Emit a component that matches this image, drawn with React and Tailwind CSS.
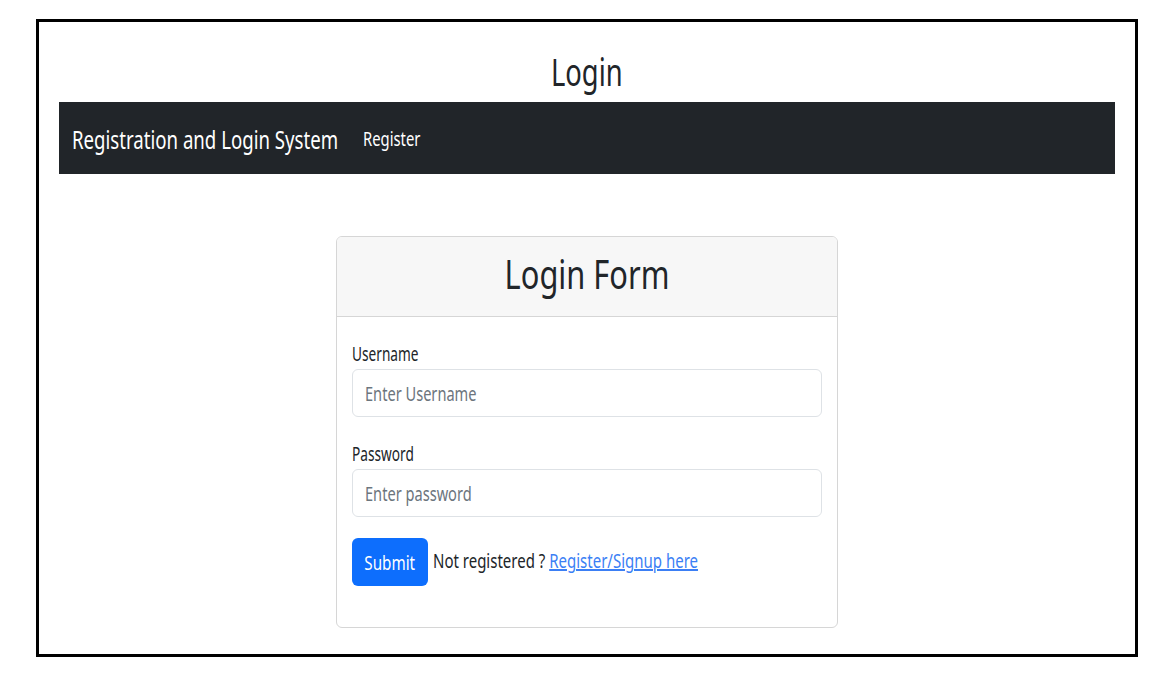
import React, { useState } from "react";

const font = { fontFamily: '"Noto Sans", "Open Sans", sans-serif' };

// the reference renders its UI font narrow; squeeze text horizontally to match
function Narrow({ children, className = "" }) {
  return <span className={"inline-block whitespace-nowrap " + className}>{children}</span>;
}

function Field({ label, type, value, onChange, placeholder, className = "" }) {
  return (
    <div className={className}>
      <label className="block h-[24px] text-[19px] leading-[24px] text-[#212529] mb-[3px]">
        <Narrow className="origin-left scale-x-[0.72]">{label}</Narrow>
      </label>
      <div className="relative">
        <input
          type={type}
          value={value}
          onChange={(e) => onChange(e.target.value)}
          placeholder={placeholder}
          className="block w-full h-[48px] border border-[#dee2e6] rounded-[6px] px-[12px] pt-[4px] text-[20px] leading-[20px] text-[#212529] placeholder:text-transparent outline-none"
        />
        {value === "" && (
          <span className="pointer-events-none absolute left-[13px] top-[5px] h-[40px] flex items-center text-[20px] leading-[20px] text-[#6c757d]">
            <Narrow className="origin-left scale-x-[0.73]">{placeholder}</Narrow>
          </span>
        )}
      </div>
    </div>
  );
}

export default function App() {
  const [username, setUsername] = useState("");
  const [password, setPassword] = useState("");

  return (
    <div className="w-[1162px] h-[681px] bg-white pt-[19px] pl-[36px]" style={font}>
      <div className="w-[1102px] h-[638px] border-[3px] border-black px-[20px]">
        {/* Page title */}
        <h1 className="h-[80px] pt-[30px] text-center text-[38px] leading-[38px] text-[#212529]">
          <Narrow className="scale-x-[0.72]">Login</Narrow>
        </h1>

        {/* Navbar */}
        <nav className="h-[72px] bg-[#212529] flex items-center pl-[13px] pt-[2px]">
          <span className="inline-block w-[266px] text-white text-[25px] leading-[25px]">
            <Narrow className="origin-left scale-x-[0.745]">Registration and Login System</Narrow>
          </span>
          <a href="#" className="inline-block w-[56px] ml-[25px] text-white text-[19px] leading-[19px]">
            <Narrow className="origin-left scale-x-[0.78]">Register</Narrow>
          </a>
        </nav>

        {/* Card */}
        <div className="mt-[62px] mx-auto w-[502px] border border-[#d6d6d6] rounded-[6px] overflow-hidden">
          <div className="h-[80px] pt-[17px] bg-[#f7f7f7] border-b border-[#d6d6d6] text-center">
            <h2 className="text-[40px] leading-[40px] text-[#212529]">
              <Narrow className="scale-x-[0.77]">Login Form</Narrow>
            </h2>
          </div>
          <form className="px-[15px] pt-[25px] pb-[41px]" onSubmit={(e) => e.preventDefault()}>
            <Field label="Username" type="text" value={username} onChange={setUsername} placeholder="Enter Username" />
            <Field
              label="Password"
              type="password"
              value={password}
              onChange={setPassword}
              placeholder="Enter password"
              className="mt-[25px]"
            />
            <div className="flex items-start mt-[21px]">
              <button
                type="submit"
                className="w-[76px] h-[48px] flex items-center justify-center pt-[2px] bg-[#0d6efd] text-white text-[19px] leading-[19px] rounded-[6px]"
              >
                <Narrow className="scale-x-[0.8]">Submit</Narrow>
              </button>
              <span className="inline-block w-[266px] ml-[5px] mt-[13px] text-[20px] leading-[20px] text-[#212529]">
                <Narrow className="origin-left scale-x-[0.75]">
                  Not registered ?{" "}
                  <a href="#" className="text-[#3b7ff5] underline">Register/Signup here</a>
                </Narrow>
              </span>
            </div>
          </form>
        </div>
      </div>
    </div>
  );
}
